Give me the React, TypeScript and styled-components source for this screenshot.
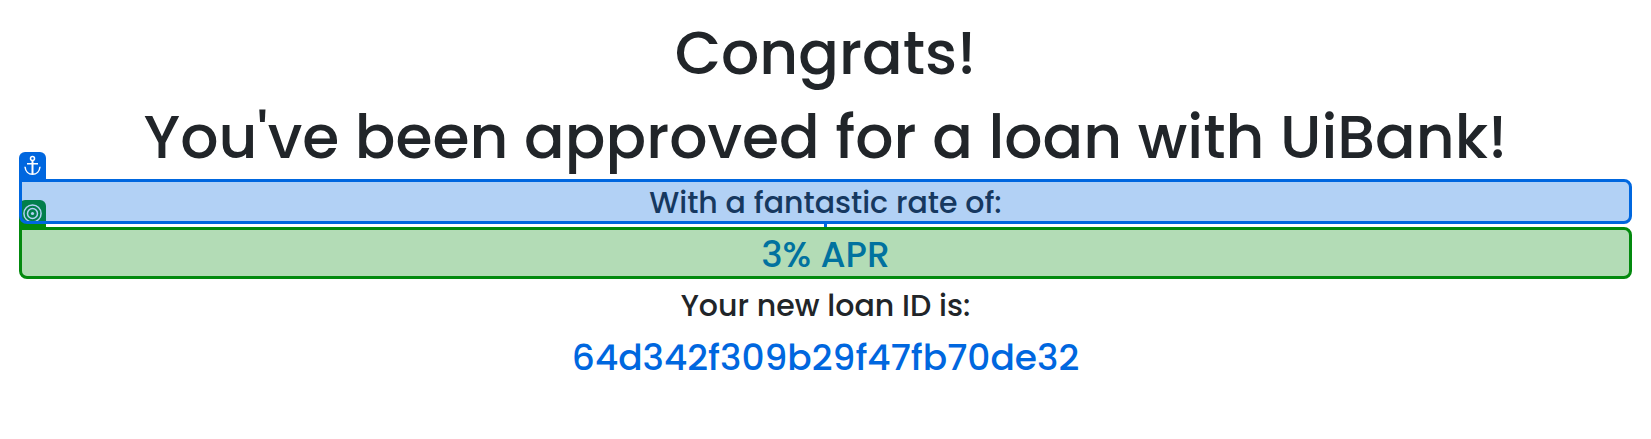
import React from "react";
import styled, { createGlobalStyle } from "styled-components";

const BLUE = "#0067df";
const GREEN = "#038a0e";

const GlobalStyle = createGlobalStyle`
  * { box-sizing: border-box; }
  body {
    margin: 0;
    background: #ffffff;
    color: #212529;
    font-family: Poppins, Inter, "Liberation Sans", sans-serif;
    font-weight: 500;
  }
`;

const Page = styled.main`
  display: flex;
  flex-direction: column;
  padding: 11px 19px 48px;
  text-align: center;
`;

const Title = styled.h1`
  margin: 0;
  font-size: 60px;
  font-weight: 500;
  line-height: 84px;
`;

const Line = styled.p<{ $value?: boolean }>`
  margin: 0;
  padding-top: ${(p) => (p.$value ? 4 : 2)}px;
  color: ${(p) => (p.$value ? BLUE : "inherit")};
  font-size: ${(p) => (p.$value ? 36 : 30)}px;
  line-height: ${(p) => (p.$value ? 42 : 37)}px;
`;

const Details = styled.div`
  display: flex;
  flex-direction: column;
  gap: 9px;
  padding-top: 6px;
`;

const Selection = styled.section<{ $color: string; $level: number }>`
  position: relative;
  z-index: ${(p) => p.$level};
  border: 3px solid ${(p) => p.$color};
  border-radius: 0 8px 8px 8px;

  &::after {
    content: "";
    position: absolute;
    inset: 0;
    background: ${(p) => p.$color};
    border-radius: 0 4px 4px 4px;
    opacity: 0.3;
  }
`;

const Tab = styled.span<{ $color: string }>`
  position: absolute;
  bottom: 100%;
  left: -3px;
  width: 27px;
  height: 30px;
  padding: 3px;
  border-radius: 6px 6px 0 0;
  background: ${(p) => p.$color};

  svg { display: block; }
`;

const Connector = styled.span`
  align-self: center;
  width: 3px;
  height: 3px;
  background: ${BLUE};
`;

const AnchorIcon = () => (
  <svg width="21" height="21" viewBox="0 0 21 21" fill="none" stroke="#fff" strokeWidth="1.5" aria-hidden="true">
    <circle cx="10.5" cy="3.6" r="2" />
    <path d="M10.5 5.6v13.400" strokeWidth="2" />
    <path d="M5 8.700h11M3 11.800c.4 4.600 3.500 7.500 7.500 7.500s7.100-2.900 7.500-7.500" />
  </svg>
);

const TargetIcon = () => (
  <svg width="21" height="21" viewBox="0 0 21 21" fill="none" stroke="#fff" strokeWidth="1.5" aria-hidden="true">
    <circle cx="10.5" cy="10.5" r="8.6" />
    <circle cx="10.5" cy="10.5" r="5" />
    <circle cx="10.5" cy="10.5" r="1.6" fill="#fff" stroke="none" />
  </svg>
);

export default function App() {
  return (
    <>
      <GlobalStyle />
      <Page>
        <Title>
          Congrats!
          <br />
          You've been approved for a loan with UiBank!
        </Title>
        <Selection $color={BLUE} $level={2}>
          <Tab $color={BLUE}><AnchorIcon /></Tab>
          <Line>With a fantastic rate of:</Line>
        </Selection>
        <Connector />
        <Selection $color={GREEN} $level={1}>
          <Tab $color={GREEN}><TargetIcon /></Tab>
          <Line $value>3% APR</Line>
        </Selection>
        <Details>
          <Line>Your new loan ID is:</Line>
          <Line $value>64d342f309b29f47fb70de32</Line>
        </Details>
      </Page>
    </>
  );
}
